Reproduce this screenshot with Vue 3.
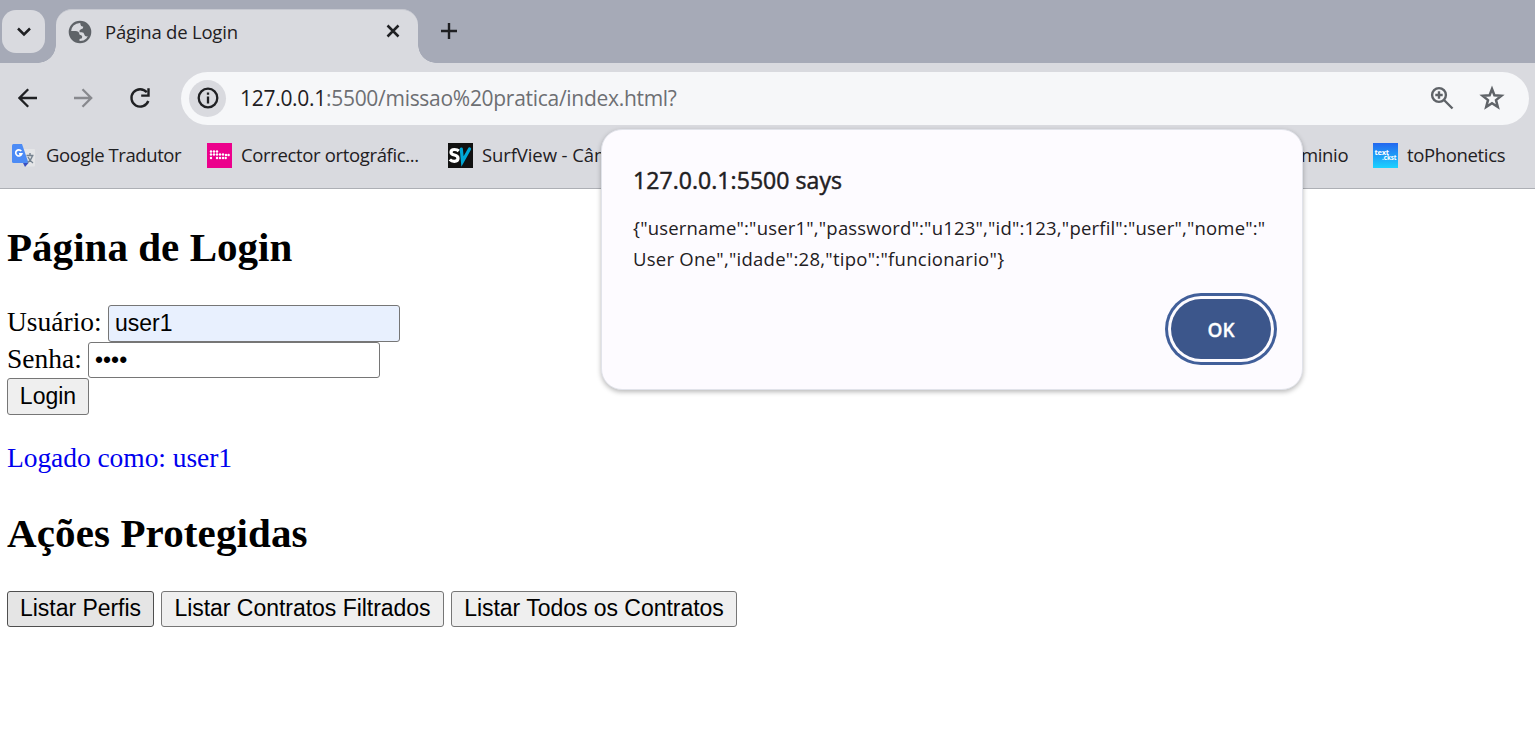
<script setup>
const actions = [
  { label: 'Listar Perfis', cls: 'b1' },
  { label: 'Listar Contratos Filtrados', cls: 'b2' },
  { label: 'Listar Todos os Contratos', cls: 'b3' },
]
const dots = [
  [4, 8.5], [7, 8.5], [10, 8.5],
  [4, 11.5], [7, 11.5], [10, 11.5], [13, 11.5], [16, 11.5], [19, 12], [21.6, 12],
  [4, 15], [10, 15], [13, 15], [16, 15], [18.7, 15],
]
</script>

<template>
  <div class="window">
    <header class="tabstrip">
      <div class="search-tabs">
        <svg width="16" height="10" viewBox="0 0 16 10"><path d="M2 1.500 8 7.500 14 1.500" fill="none" stroke="#1f2023" stroke-width="2.500" /></svg>
      </div>
      <div class="tab">
        <svg class="globe" width="24" height="24" viewBox="0 0 24 24">
          <circle cx="12" cy="12" r="10.200" fill="none" stroke="#5f6368" stroke-width="2.200" />
          <path d="M12.500 1.500Q20 2 22.500 10V13.500Q21.500 16 19 16.500 16.500 16.500 16.300 14.500 16 12.300 13.500 12.300H11.500Q11 9.700 13 9.300 15.500 9 15.300 6.800 12.500 6.500 12.300 4ZM1.500 11H7.500Q11 11.200 11.200 13.500 11.200 15 13.200 15.300 14.700 16 14 18.300L11.500 19V22.500Q2.500 21.500 1.500 11Z" fill="#5f6368" />
        </svg>
        <span class="tab-title">Página de Login</span>
        <svg class="close" width="14" height="14" viewBox="0 0 14 14"><path d="m1.500 1.500 11 11m0-11-11 11" stroke="#1f2023" stroke-width="2.500" /></svg>
      </div>
      <svg class="plus" width="18" height="18" viewBox="0 0 18 18"><path d="M1 9h16M9 1v16" stroke="#1f2023" stroke-width="2.400" /></svg>
    </header>

    <div class="toolbar">
      <svg class="back" width="20" height="20" viewBox="0 0 20 20"><path d="M19 10H2M10.200 1.300 1.500 10l8.700 8.700" fill="none" stroke="#1f2023" stroke-width="2.300" /></svg>
      <svg class="forward" width="20" height="20" viewBox="0 0 20 20"><path d="M0 10h17M8.500 1.300 17.200 10l-8.700 8.700" fill="none" stroke="#88898e" stroke-width="2.300" /></svg>
      <svg class="reload" width="22" height="22" viewBox="0 0 22 22"><path d="M17.800 5.300A8.700 8.700 0 1 0 19.300 14" fill="none" stroke="#1f2023" stroke-width="2.400" /><path d="M20.700 1.300v8.500h-8.500V7.400h6.100V1.300z" fill="#1f2023" /></svg>
      <div class="omnibox">
        <div class="info">
          <svg width="22" height="22" viewBox="0 0 22 22"><circle cx="11" cy="11" r="9.300" fill="none" stroke="#1f2023" stroke-width="2.300" /><path d="M11 9.500v7M11 5.500v2.300" stroke="#1f2023" stroke-width="2.300" /></svg>
        </div>
        <span class="url"><b>127.0.0.1</b>:5500/missao%20pratica/index.html?</span>
        <svg class="zoom" width="24" height="24" viewBox="0 0 24 24"><g fill="none" stroke="#5f6368" stroke-width="2.400"><circle cx="9" cy="9" r="6.900" /><path d="m14 14 8.500 8.500M5.300 9h7.400M9 5.300v7.400" /></g></svg>
        <svg class="star" width="26" height="26" viewBox="0 0 26 26"><path d="m13 4 2.400 6.200 7 .5-5.400 4.400 1.800 6.900-5.800-3.800L7.200 22 9 15.100l-5.400-4.400 7-.5z" fill="none" stroke="#5f6368" stroke-width="2.500" /></svg>
      </div>
    </div>

    <nav class="bookmarks">
      <svg class="ico i1" width="26" height="26" viewBox="0 0 26 26">
        <path d="M9 6h14q1 0 1 1v15.500q0 1-1 1H13z" fill="#e4e5e7" />
        <path d="M2.500 1H11L17.500 20H2.500Q1 20 1 18.500v-16Q1 1 2.500 1" fill="#4c8bf5" />
        <path d="M12 20h5.500L14 24z" fill="#3a4fc0" />
        <path d="M10.300 8A3.100 3.100 0 1 0 10.800 10.800H8" fill="none" stroke="#fff" stroke-width="1.700" />
        <path d="M15.500 12.500h7M19 10v2.500M21.500 12.500q-1.500 5-5 7M17 14q2 4 5 6" fill="none" stroke="#75828f" stroke-width="1.400" />
      </svg>
      <span class="bm t1">Google Tradutor</span>
      <svg class="ico i2" width="25" height="25" viewBox="0 0 25 25"><path fill="#ec008c" d="M0 0h25v25H0z" /><circle v-for="(d, i) in dots" :key="i" :cx="d[0]" :cy="d[1]" r="1.200" fill="#fff" /></svg>
      <span class="bm t2">Corrector ortográfic...</span>
      <svg class="ico i3" width="25" height="25" viewBox="0 0 25 25"><path fill="#111" d="M0 0h25v25H0z" /><path d="M10.800 8Q9.300 6.500 6.500 6.500 3 6.500 3 9.200 3 11.300 6.500 12 10 12.700 10 15.300 10 18.300 6.300 18.300 3.500 18.300 1.800 16.500" fill="none" stroke="#fff" stroke-width="3.200" /><path d="m13.300 6 1.200 12.500L21.500 6" fill="none" stroke="#00a8d6" stroke-width="3.200" stroke-linecap="round" /></svg>
      <span class="bm t3">SurfView - Câm</span>
      <span class="bm t4">minio</span>
      <svg class="ico i4" width="25" height="25" viewBox="0 0 25 25"><defs><linearGradient id="sky" x2="0" y2="1"><stop stop-color="#2367ef" /><stop offset="1" stop-color="#1bd3ff" /></linearGradient></defs><path fill="url(#sky)" d="M0 0h25v25H0z" /><text x="1.500" y="12" class="logo-text" textLength="14.500">text</text><text x="9" y="17" class="logo-text" textLength="14.500" lengthAdjust="spacingAndGlyphs">.ckst</text></svg>
      <span class="bm t5">toPhonetics</span>
    </nav>

    <main class="page">
      <h1>Página de Login</h1>
      <form @submit.prevent>
        <div class="field"><label class="l1">Usuário:</label><input class="filled" type="text" value="user1" /></div>
        <div class="field second"><label class="l2">Senha:</label><input class="secret" type="password" value="u123" /></div>
        <button class="login">Login</button>
      </form>
      <p>Logado como: user1</p>
      <h1 class="h2">Ações Protegidas</h1>
      <div class="actions"><button v-for="a in actions" :key="a.label" :class="a.cls">{{ a.label }}</button></div>
    </main>

    <section class="dialog">
      <h2>127.0.0.1:5500 says</h2>
      <div class="message"><div class="m1">{"username":"user1","password":"u123","id":123,"perfil":"user","nome":"</div><div class="m2">User One","idade":28,"tipo":"funcionario"}</div></div>
      <button class="ok">OK</button>
    </section>
  </div>
</template>

<style>
body { margin: 0; overflow: hidden; }
</style>

<style scoped>
* { box-sizing: border-box; }
svg { display: block; flex: none; }
.window { position: relative; width: 1535px; height: 752px; overflow: hidden; background: #fff; font-family: "Open Sans", "Noto Sans", sans-serif; color: #1f2023; }
.tabstrip { height: 63px; background: #a6aab7; display: flex; align-items: flex-start; }
.search-tabs { width: 43px; height: 43px; margin: 10px 0 0 2px; border-radius: 14px; background: #d9dadf; display: flex; align-items: center; justify-content: center; }
.tab { position: relative; width: 362px; height: 54px; margin: 9px 0 0 11px; border-radius: 16px 16px 0 0; background: #d9dadf; display: flex; align-items: flex-start; border-top: 1px solid #c7c9d1; }
.tab::before, .tab::after { content: ""; position: absolute; bottom: 0; width: 18px; height: 18px; }
.tab::before { left: -18px; background: radial-gradient(circle at 0 0, transparent 17.5px, #d9dadf 18px); }
.tab::after { right: -18px; background: radial-gradient(circle at 100% 0, transparent 17.5px, #d9dadf 18px); }
.globe { margin: 10px 0 0 12px; }
.tab-title { margin: 8px 0 0 13px; width: 280px; font-size: 18.500px; line-height: 28px; letter-spacing: -.21px; white-space: nowrap; }
.close { position: absolute; left: 330px; top: 14px; }
.plus { margin: 22px 0 0 22px; }
.toolbar { height: 70px; background: #d9dadf; display: flex; align-items: center; padding-left: 18px; }
.forward { margin-left: 36px; }
.reload { margin-left: 35px; }
.omnibox { width: 1348px; height: 53px; margin-left: 30px; border-radius: 27px; background: #f6f7f9; display: flex; align-items: center; padding-left: 8px; }
.info { width: 37px; height: 37px; border-radius: 50%; background: #d9dadf; display: flex; align-items: center; justify-content: center; }
.url { width: 1190px; margin-left: 14px; color: #6d6f73; font-size: 21px; letter-spacing: -.29px; white-space: nowrap; }
.url b { font-weight: 400; color: #1f2023; }
.star { margin-left: 25px; }
.bookmarks { height: 56px; background: #d9dadf; border-bottom: 1px solid #adafb5; display: flex; align-items: flex-start; padding: 10px 0 0 12px; }
.bm { font-size: 18.500px; line-height: 26px; letter-spacing: -.35px; white-space: nowrap; margin-top: -1px; }
.i1 { margin-left: -1px; }
.t1 { width: 161px; margin-left: 9px; letter-spacing: -.43px; }
.t2 { width: 207px; margin-left: 9px; }
.t3 { width: 144px; margin-left: 9px; letter-spacing: -.1px; }
.t4 { margin-left: 675px; width: 72px; }
.t5 { margin-left: 9px; }
.logo-text { font: bold 7.500px "Noto Sans", sans-serif; fill: #fff; }
.page { padding: 35px 7px 0; font-family: "Liberation Serif", "Times New Roman", serif; color: #000; }
h1 { margin: 0; font-size: 41px; line-height: 47px; font-weight: 700; letter-spacing: .04px; }
form { margin-top: 34px; }
.field { height: 37px; display: flex; align-items: flex-start; font-size: 27.500px; line-height: 35px; }
.second { height: 36px; }
label { display: block; white-space: nowrap; margin-top: -1px; }
.l1 { width: 101px; }
.l2 { width: 81px; }
input { width: 292px; height: 37px; border: 1px solid #767676; border-radius: 3px; padding: 0 6px; font: 23px "Liberation Sans", Arial, sans-serif; background: #fff; color: #000; }
.filled { background: #e8f0fe; }
.secret { height: 36px; }
.page button { height: 37px; padding: 0 0 1px; border: 1px solid #767676; border-radius: 3px; background: #efefef; color: #000; font: 23px "Liberation Sans", Arial, sans-serif; white-space: nowrap; }
.page .login { display: block; width: 82px; }
p { margin: 27px 0 0; font-size: 27.500px; line-height: 32px; letter-spacing: -.06px; color: #00e; }
.h2 { margin-top: 36px; letter-spacing: .12px; }
.actions { display: flex; gap: 7px; margin-top: 34px; }
.page .actions button { height: 36px; letter-spacing: -.03px; }
.page .b1 { width: 147px; background: #e5e5e5; border-color: #4f4f4f; }
.b2 { width: 283px; }
.b3 { width: 286px; }
.dialog { position: absolute; left: 601px; top: 129px; width: 702px; height: 261px; border: 1px solid #e1e3ea; border-radius: 21px; background: #fdfbff; box-shadow: 0 2px 5px rgba(0, 0, 0, .28); padding: 32px 25px 0 31px; display: flex; flex-direction: column; }
h2 { margin: 0; font-size: 23px; line-height: 36px; font-weight: 500; letter-spacing: .06px; -webkit-text-stroke: .5px #1f2023; }
.message { margin-top: 14px; font-size: 18.500px; line-height: 31px; white-space: nowrap; }
.m1 { letter-spacing: .19px; }
.m2 { letter-spacing: .26px; }
.ok { align-self: flex-end; width: 100px; height: 60px; margin: 25px 6px 0 0; padding: 1px 0 0; border: 0; border-radius: 30px; background: #3c568b; color: #fff; font: 600 19px "Open Sans", sans-serif; -webkit-text-stroke: .3px #fff; box-shadow: 0 0 0 3px #fdfbff, 0 0 0 6px #415f9a; }
</style>
